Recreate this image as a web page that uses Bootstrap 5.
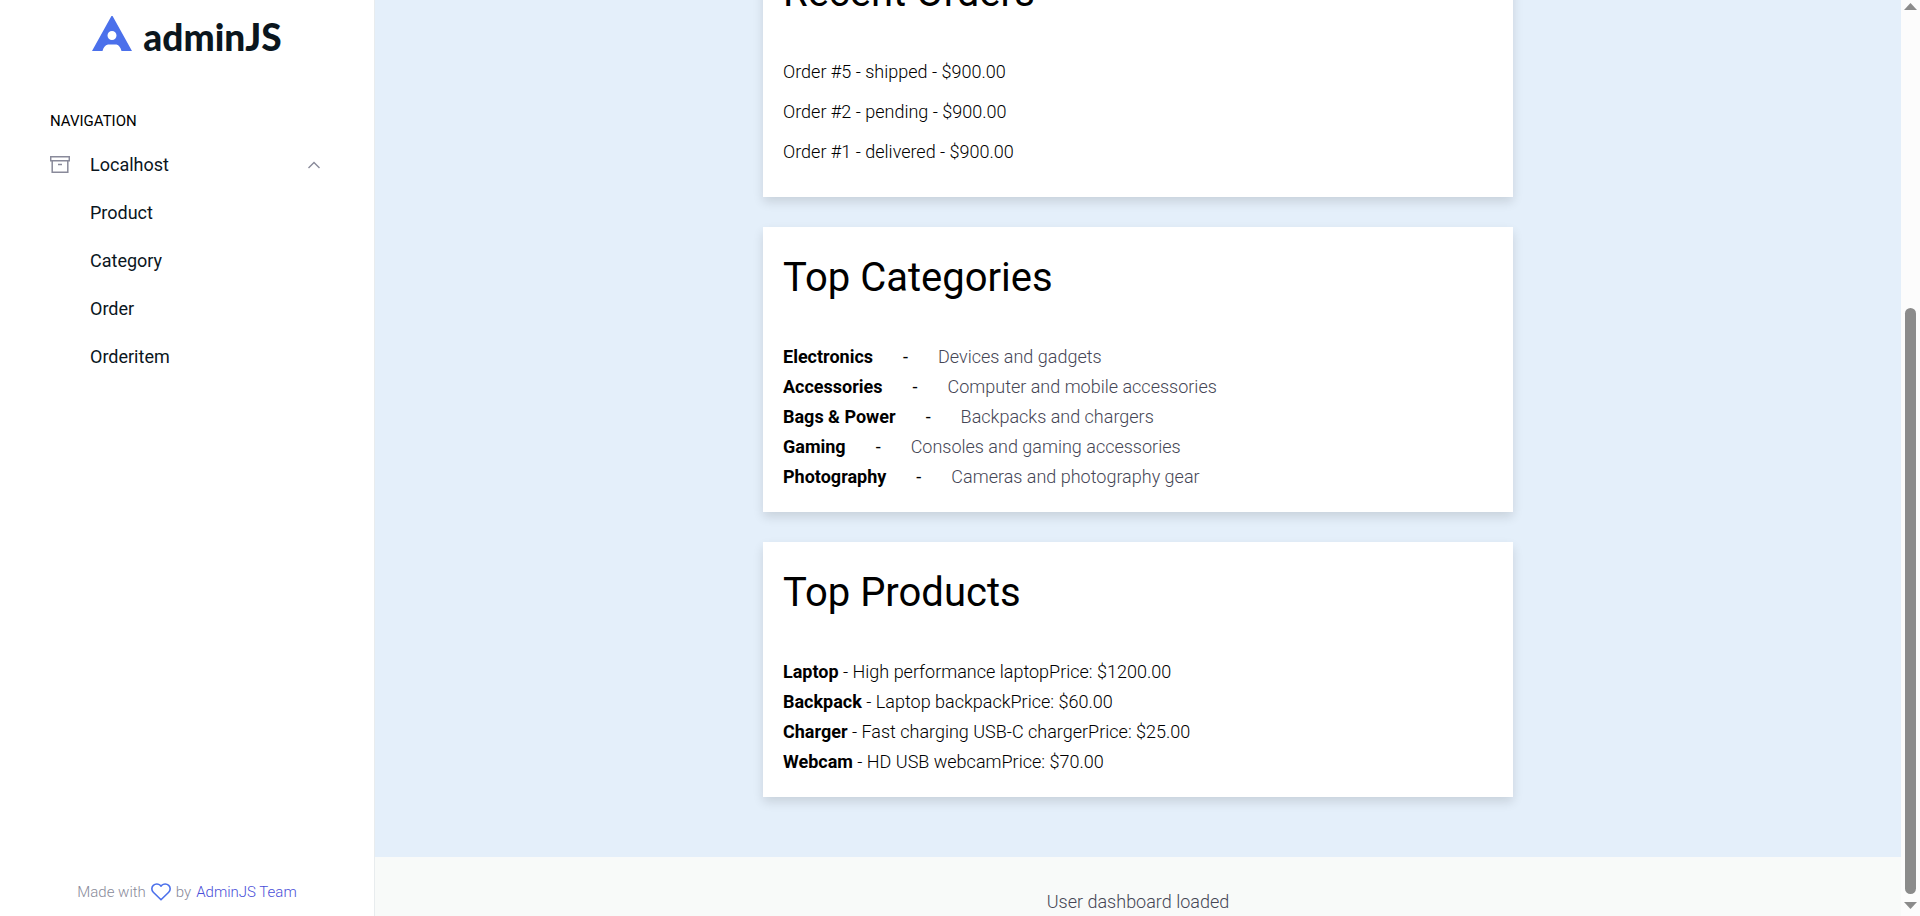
<!DOCTYPE html>
<html lang="en">
<head>
<meta charset="utf-8">
<meta name="viewport" content="width=device-width, initial-scale=1">
<title>AdminJS dashboard</title>
<link href="https://cdn.jsdelivr.net/npm/bootstrap@5.3.0/dist/css/bootstrap.min.css" rel="stylesheet">
<style>
  body { font-family: Roboto, sans-serif; font-size: 18px; line-height: 30px; font-weight: 300; color: #000; background: #fff; }
  .sidebar { width: 375px; border-right: 1px solid #e8ecee; }
  .brand { height: 64px; gap: 11px; color: #0b161d; }
  .brand-name { font: 900 37px/48px Lato, sans-serif; padding-top: 13px; }
  .side-nav { padding: 42px 54px 0 50px; }
  .side-title { font-size: 15px; line-height: 30px; font-weight: 400; margin-bottom: 5px; }
  .side-link { display: flex; align-items: center; width: 100%; height: 48px; font-weight: 400; color: #0b161d; text-decoration: none; background: none; border: 0; padding: 0; }
  .side-link svg:first-child { margin-right: 20px; }
  .side-sub { padding-left: 40px; }
  .credit { font-size: 15px; gap: 5px; color: #898a9a; padding-bottom: 9px; }
  .credit a { color: #4a4fd8; text-decoration: none; }
  .dash { background: #e4effa; padding-bottom: 60px; gap: 30px; }
  .panel { width: 750px; max-width: 100%; padding: 20px; background: #fff; box-shadow: 0 5px 10px rgba(0,0,0,.12); }
  .panel h2 { font-size: 40px; line-height: 62px; font-weight: 400; margin: 0 0 33px; }
  .panel ul { list-style: none; margin: 0; padding: 0; }
  .orders li { margin-bottom: 10px; }
  .cats li { display: flex; gap: 30px; }
  .cats span:last-child { color: #454655; }
  .panel strong { font-weight: 700; }
  .status { background: #f8faf9; color: #454655; padding-top: 31px; line-height: 28px; }
  .scroller { width: 19px; background: #fcfcfc; padding: 3px 0 7px; }
  .thumb { width: 11px; background: #8b8b8b; border-radius: 6px; }
</style>
</head>
<body class="d-flex vh-100 overflow-hidden">

<aside class="sidebar d-flex flex-column flex-shrink-0">
  <a href="#" class="brand d-flex justify-content-center text-decoration-none" aria-label="adminJS">
    <svg class="mt-3" width="40" height="35" viewBox="0 0 40 35" aria-hidden="true"><path fill="#4b70eb" fill-rule="evenodd" d="M20 -1 40 35H29.500C28.500 31.500 27 29 24.500 28.500H16C13 29 11.500 31.500 10.500 35H0ZM20 15a4.500 4.500 0 1 0 0 9a4.500 4.500 0 0 0 0-9Z"/></svg>
    <span class="brand-name">adminJS</span>
  </a>
  <nav class="side-nav" aria-label="Navigation">
    <div class="side-title">NAVIGATION</div>
    <button type="button" class="side-link" aria-expanded="true">
      <svg width="20" height="20" viewBox="0 0 20 20" fill="none" stroke="#898a9a" stroke-width="1.500" aria-hidden="true"><path d="M.7 1.700h18.600v4H.7zM2.200 5.700h15.600v11.500H2.200zM8 9.500h4"/></svg>
      <span>Localhost</span>
      <svg class="ms-auto" width="12" height="8" viewBox="0 0 12 8" fill="none" stroke="#898a9a" stroke-width="1.400" aria-hidden="true"><path d="m.5 7 5.500-5.500L11.500 7"/></svg>
    </button>
    <div class="side-sub">
      <a class="side-link" href="#">Product</a>
      <a class="side-link" href="#">Category</a>
      <a class="side-link" href="#">Order</a>
      <a class="side-link" href="#">Orderitem</a>
    </div>
  </nav>
  <div class="credit d-flex align-items-center justify-content-center mt-auto">
    <span>Made with</span>
    <svg width="20" height="18" viewBox="0 0 20 18" fill="none" stroke="#4b70eb" stroke-width="1.600" stroke-linejoin="round" aria-hidden="true"><path d="M10 16.800 2.300 9.200C.3 7.200.4 4 2.300 2.300 4.300.5 7.500.6 9.200 2.300L10 3.100l.8-.8C12.500.6 15.700.5 17.700 2.300c1.900 1.700 2 4.900 0 6.900Z"/></svg>
    <span>by</span>
    <a href="#">AdminJS Team</a>
  </div>
</aside>

<main class="flex-grow-1 d-flex flex-column justify-content-end overflow-hidden">
  <div class="dash d-flex flex-column align-items-center justify-content-end flex-grow-1">
    <section class="panel orders">
      <h2>Recent Orders</h2>
      <ul>
        <li>Order #5 - shipped - $900.00</li>
        <li>Order #2 - pending - $900.00</li>
        <li>Order #1 - delivered - $900.00</li>
      </ul>
    </section>
    <section class="panel cats">
      <h2>Top Categories</h2>
      <ul>
        <li><strong>Electronics</strong><span class="fw-normal">-</span><span>Devices and gadgets</span></li>
        <li><strong>Accessories</strong><span class="fw-normal">-</span><span>Computer and mobile accessories</span></li>
        <li><strong>Bags &amp; Power</strong><span class="fw-normal">-</span><span>Backpacks and chargers</span></li>
        <li><strong>Gaming</strong><span class="fw-normal">-</span><span>Consoles and gaming accessories</span></li>
        <li><strong>Photography</strong><span class="fw-normal">-</span><span>Cameras and photography gear</span></li>
      </ul>
    </section>
    <section class="panel">
      <h2>Top Products</h2>
      <ul>
        <li><strong>Laptop</strong> - High performance laptopPrice: $1200.00</li>
        <li><strong>Backpack</strong> - Laptop backpackPrice: $60.00</li>
        <li><strong>Charger</strong> - Fast charging USB-C chargerPrice: $25.00</li>
        <li><strong>Webcam</strong> - HD USB webcamPrice: $70.00</li>
      </ul>
    </section>
  </div>
  <footer class="status text-center">User dashboard loaded</footer>
</main>

<div class="scroller d-flex flex-column align-items-center flex-shrink-0" aria-hidden="true">
  <svg width="13" height="7" viewBox="0 0 13 7" fill="#8b8b8b"><path d="M6.500 0 13 7H0z"/></svg>
  <div class="w-100 flex-grow-1 d-flex flex-column align-items-center justify-content-end pb-2">
    <div class="thumb" style="height:66.3%"></div>
  </div>
  <svg width="13" height="7" viewBox="0 0 13 7" fill="#8b8b8b"><path d="M0 0h13L6.500 7z"/></svg>
</div>

<script src="https://cdn.jsdelivr.net/npm/bootstrap@5.3.0/dist/js/bootstrap.bundle.min.js"></script>
</body>
</html>
